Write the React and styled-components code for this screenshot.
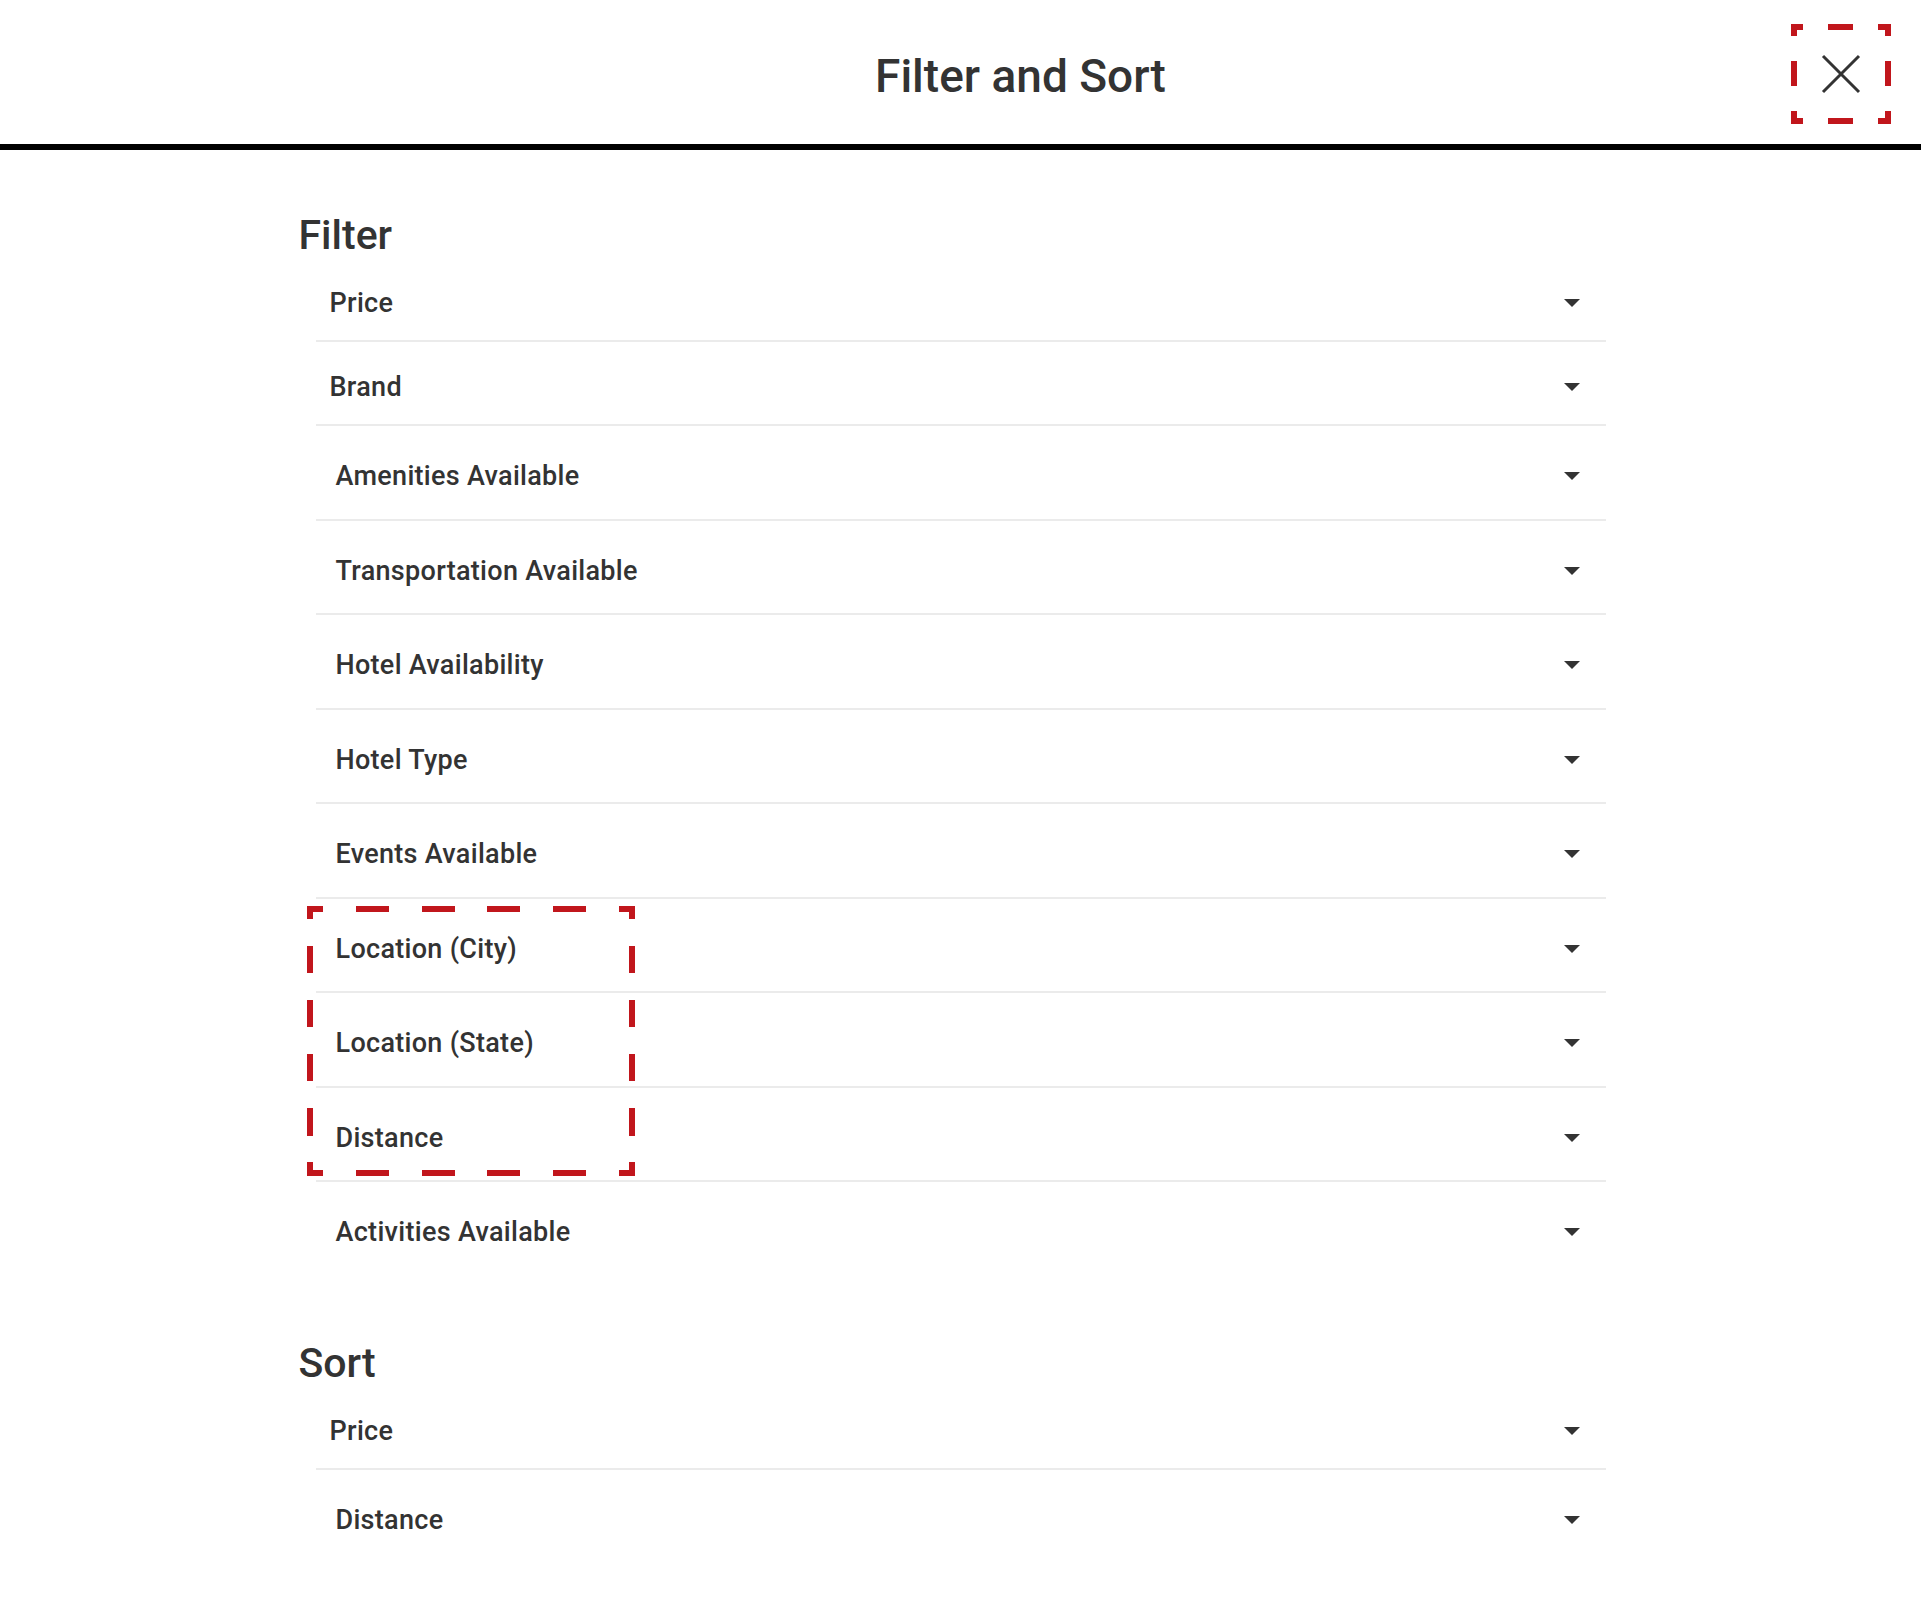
import React from "react";
import styled, { createGlobalStyle, css } from "styled-components";

const RED = "#C1161C";

const GlobalStyle = createGlobalStyle`
	html, body {
		margin: 0;
		padding: 0;
		background: #FFFFFF;
	}

	body {
		font-family: Roboto, "Liberation Sans", Arial, sans-serif;
		color: #333333;
	}
`;

// long dashes with half-length corner pieces, like the highlight frames in the mock
const dashStops = (len, count) => {
	const seg = len / (count + 1);
	const corner = seg / 2;
	const stops = [`${RED} 0 ${corner}px`];
	let pos = corner;
	for (let i = 0; i < count; i++) {
		const col = i % 2 === 0 ? "transparent" : RED;
		stops.push(`${col} ${pos}px ${pos + seg}px`);
		pos += seg;
	}
	stops.push(`${RED} ${pos}px ${len}px`);
	return stops.join(", ");
};

const dashedFrame = (w, h, across, down) => css`
	background:
		linear-gradient(to right, ${dashStops(w, across)}) left top / 100% 6px no-repeat,
		linear-gradient(to right, ${dashStops(w, across)}) left bottom / 100% 6px no-repeat,
		linear-gradient(to bottom, ${dashStops(h, down)}) left top / 6px 100% no-repeat,
		linear-gradient(to bottom, ${dashStops(h, down)}) right top / 6px 100% no-repeat;
`;

const Page = styled.div`
	display: flex;
	flex-direction: column;
	min-height: 1598px;
`;

const Header = styled.header`
	display: grid;
	grid-template-columns: 1fr auto 1fr;
	align-items: center;
	height: 144px;
	padding-left: 120px;
	border-bottom: 6px solid #000000;
`;

const Title = styled.h1`
	grid-column: 2;
	margin: 0;
	padding-top: 7px;
	font-size: 46px;
	font-weight: 500;
	line-height: 1;
	color: #333333;
	white-space: nowrap;
`;

const CloseButton = styled.button`
	grid-column: 3;
	justify-self: end;
	display: flex;
	align-items: center;
	justify-content: center;
	width: 100px;
	height: 100px;
	margin-right: 30px;
	margin-top: 4px;
	padding: 0;
	border: none;
	cursor: pointer;
	${dashedFrame(100, 100, 3, 3)}
`;

const Main = styled.main`
	display: flex;
	flex-direction: column;
	align-items: center;
	padding-top: 61px;
`;

const Section = styled.section`
	display: flex;
	flex-direction: column;
	width: 1324px;
	margin-bottom: ${(p) => p.$gap || 0}px;
`;

const SectionHeading = styled.h2`
	margin: 0;
	padding-top: 1px;
	font-size: 41px;
	font-weight: 500;
	line-height: 46px;
	color: #333333;
`;

const List = styled.ul`
	list-style: none;
	margin: 0;
	padding: 0 17px;
`;

const Highlight = styled.div`
	position: relative;

	&::after {
		content: "";
		position: absolute;
		top: 7px;
		left: -9px;
		width: 328px;
		height: 270px;
		pointer-events: none;
		${dashedFrame(328, 270, 9, 9)}
	}
`;

const Row = styled.li`
	display: flex;
	align-items: center;
	justify-content: space-between;
	padding: ${(p) => (p.$compact ? "29px 26px 21px 14px" : "34px 26px 26.5px 20px")};
	border-bottom: 2px solid #EBEBEB;
	cursor: pointer;

	&:last-child {
		border-bottom: ${(p) => (p.$last ? "none" : "2px solid #EBEBEB")};
	}
`;

const Label = styled.span`
	font-size: 27px;
	font-weight: 500;
	line-height: 32px;
	letter-spacing: 0.3px;
	color: #333333;
`;

const Caret = () => (
	<svg width="16" height="8" viewBox="0 0 16 8">
		<polygon points="0,0 16,0 8,8" fill="#333333" />
	</svg>
);

const CloseIcon = () => (
	<svg width="40" height="40" viewBox="0 0 40 40">
		<path d="M2 2 L38 38 M38 2 L2 38" stroke="#333333" strokeWidth="3" fill="none" />
	</svg>
);

const Option = ({ label, compact, last }) => (
	<Row $compact={compact} $last={last}>
		<Label>{label}</Label>
		<Caret />
	</Row>
);

const App = () => (
	<>
		<GlobalStyle />
		<Page>
			<Header>
				<Title>Filter and Sort</Title>
				<CloseButton aria-label="Close">
					<CloseIcon />
				</CloseButton>
			</Header>

			<Main>
				<Section $gap={64}>
					<SectionHeading>Filter</SectionHeading>
					<List>
						<Option label="Price" compact />
						<Option label="Brand" compact />
						<Option label="Amenities Available" />
						<Option label="Transportation Available" />
						<Option label="Hotel Availability" />
						<Option label="Hotel Type" />
						<Option label="Events Available" />
						<Highlight>
							<Option label="Location (City)" />
							<Option label="Location (State)" />
							<Option label="Distance" />
						</Highlight>
						<Option label="Activities Available" last />
					</List>
				</Section>

				<Section>
					<SectionHeading>Sort</SectionHeading>
					<List>
						<Option label="Price" compact />
						<Option label="Distance" last />
					</List>
				</Section>
			</Main>
		</Page>
	</>
);

export default App;
